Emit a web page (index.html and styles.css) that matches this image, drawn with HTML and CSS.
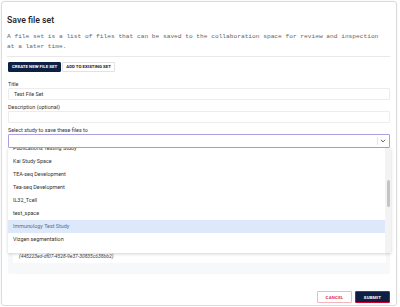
FILE: index.html
```html
<!DOCTYPE html>
<html lang="en">
<head>
  <meta charset="UTF-8" />
  <title>Save file set</title>
  <link rel="stylesheet" href="styles.css">
</head>
<body>

  <div class="dialog">
    <h1 class="title">Save file set</h1>
    <p class="desc">A file set is a list of files that can be saved to the collaboration space for review and inspection at a later time.</p>
    <div class="divider"></div>

    <div class="toggle">
      <button class="toggle-btn active">CREATE NEW FILE SET</button>
      <button class="toggle-btn">ADD TO EXISTING SET</button>
    </div>

    <label class="label first">Title</label>
    <div class="input">Test File Set</div>

    <label class="label">Description (optional)</label>
    <div class="input"></div>

    <label class="label">Select study to save these files to</label>
    <div class="select">
      <span class="select-sep"></span>
      <svg class="chevron" viewBox="0 0 10 10" width="6" height="6">
        <path d="M1.5 3 L5 6.5 L8.5 3" fill="none" stroke="#555" stroke-width="1.6"/>
      </svg>
    </div>

    <!-- files panel (mostly hidden under the open menu) -->
    <div class="panel">
      <div class="uuid">(445223ed-df07-4528-9e37-30835c638bb2)</div>
    </div>

    <div class="footer">
      <button class="btn cancel">CANCEL</button>
      <button class="btn submit">SUBMIT</button>
    </div>

    <!-- open study menu -->
    <div class="menu">
      <ul class="menu-list">
        <li>Publications Testing Study</li>
        <li>Kai Study Space</li>
        <li>TEA-seq Development</li>
        <li>Tea-seq Development</li>
        <li>IL32_Tcell</li>
        <li>test_space</li>
        <li class="hover">Immunology Test Study</li>
        <li>Vizgen segmentation</li>
      </ul>
      <div class="scrollbar"><div class="thumb"></div></div>
    </div>
  </div>

</body>
</html>
```

FILE: styles.css
```css
* {
  box-sizing: border-box;
  font-family: 'Roboto', 'Liberation Sans', sans-serif;
}

body {
  margin: 0;
  background-color: #ffffff;
}

.dialog {
  position: relative;
  margin: 1px 3px 0 1px;
  height: 305px;
  border: 1px solid #dcdcdc;
  border-radius: 3px;
  padding: 13px 6px 0 5px;
  display: flex;
  flex-direction: column;
  box-shadow: 0 0 2px rgba(0, 0, 0, 0.08);
}

.title {
  margin: 0;
  font-size: 8.7px;
  line-height: 10px;
  font-weight: 500;
  color: #222;
}

.desc {
  margin: 7px 0 0;
  padding-right: 6px;
  font-family: 'Liberation Mono', 'DejaVu Sans Mono', monospace;
  font-size: 6.2px;
  line-height: 10px;
  color: #666;
}

.divider {
  height: 1px;
  background-color: #e8e8e8;
  margin-top: 4px;
}

.toggle {
  display: flex;
  gap: 1px;
  margin-top: 5px;
  padding-left: 1px;
}

.toggle-btn {
  height: 10px;
  padding: 0 3px;
  border: 1px solid #e2e2e2;
  border-radius: 1px;
  background-color: white;
  color: #1a1a1a;
  font-size: 4.4px;
  font-weight: 700;
  line-height: 8px;
}

.toggle-btn.active {
  background-color: #0d1f45;
  border-color: #0d1f45;
  color: white;
}

.label {
  display: block;
  margin: 4px 0 1px 1px;
  font-size: 5.4px;
  line-height: 6px;
  color: #333;
}

.label.first {
  margin-top: 9px;
}

.input {
  height: 12px;
  margin-left: 1px;
  border: 1px solid #ececec;
  border-radius: 1px;
  padding: 0 5px;
  font-size: 5.4px;
  line-height: 10px;
  color: #333;
}

.select {
  position: relative;
  height: 14px;
  margin-left: 1px;
  border: 1px solid #aaa0e2;
  border-radius: 1px;
}

.select-sep {
  position: absolute;
  right: 11px;
  top: 2px;
  width: 1px;
  height: 8px;
  background-color: #e6e6e6;
}

.chevron {
  position: absolute;
  right: 3px;
  top: 3px;
}

.panel {
  height: 124px;
  margin: 2px 0 0 1px;
  background-color: #f7f8fa;
  border-radius: 2px;
  display: flex;
  flex-direction: column;
  justify-content: flex-end;
  padding: 0 4px 11px 5px;
}

.uuid {
  height: 14px;
  background-color: white;
  padding: 2px 0 0 6px;
  font-size: 5px;
  font-style: italic;
  line-height: 10px;
  color: #444;
}

.footer {
  display: flex;
  justify-content: flex-end;
  gap: 3px;
  margin-top: 17px;
}

.btn {
  width: 35px;
  height: 12px;
  border-radius: 1px;
  font-size: 4.4px;
  font-weight: 700;
  letter-spacing: 0.2px;
  padding: 0;
}

.cancel {
  background-color: white;
  border: 1px solid #f4b5bd;
  color: #d8334d;
}

.submit {
  background-color: #0d1f45;
  border: 1px solid #d6002a;
  color: white;
}

/* open menu over the form */
.menu {
  position: absolute;
  left: 6px;
  top: 146px;
  width: 383px;
  height: 105px;
  background-color: white;
  box-shadow: 0 1px 3px rgba(0, 0, 0, 0.18);
  overflow: hidden;
}

.menu-list {
  list-style: none;
  margin: -6px 0 0;
  padding: 0;
  width: 377px;
}

.menu-list li {
  height: 13px;
  padding-left: 5px;
  font-size: 5.4px;
  line-height: 13px;
  color: #333;
}

.menu-list li.hover {
  background-color: #dde8fb;
  color: #5d6c88;
}

.scrollbar {
  position: absolute;
  right: 0;
  top: 0;
  width: 6px;
  height: 100%;
  background-color: #f3f3f3;
}

.thumb {
  margin: 32px 0 0 2px;
  width: 3px;
  height: 27px;
  border-radius: 2px;
  background-color: #c4c4c4;
}
```
